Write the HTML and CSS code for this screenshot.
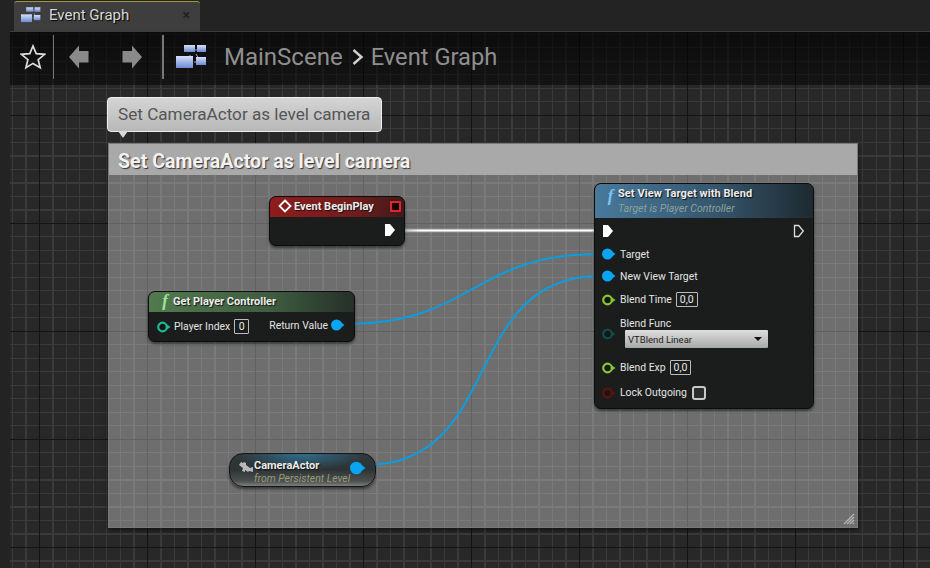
FILE: index.html
```html
<!DOCTYPE html>
<html lang="en">
<head>
  <meta charset="UTF-8" />
  <title>Event Graph</title>
  <link rel="stylesheet" href="styles.css">
</head>
<body>
  <svg class="defs" width="0" height="0">
    <defs>
      <linearGradient id="blk" x1="0" y1="0" x2="0" y2="1">
        <stop offset="0" stop-color="#d5e0f8"/>
        <stop offset="1" stop-color="#6f8bd0"/>
      </linearGradient>
      <linearGradient id="wire-fade" gradientUnits="userSpaceOnUse" x1="396" y1="0" x2="420" y2="0">
        <stop offset="0" stop-color="#999"/>
        <stop offset="1" stop-color="#fff"/>
      </linearGradient>
      <symbol id="graph-icon" viewBox="0 0 31 24">
        <path d="M17 5h5M14 10v4M20 9l3 5M18 17h4" stroke="#8fa5d8" stroke-width="1" fill="none"/>
        <rect x="8" y="0" width="11" height="7" fill="url(#blk)"/>
        <rect x="21" y="0" width="9" height="7" fill="url(#blk)"/>
        <rect x="0" y="11" width="17" height="12" fill="url(#blk)"/>
        <rect x="20" y="12" width="10" height="8" fill="url(#blk)"/>
      </symbol>
      <symbol id="exec-on" viewBox="0 0 12 14">
        <path d="M1 1h5l5 6-5 6H1z" fill="#fff"/>
      </symbol>
      <symbol id="exec-off" viewBox="0 0 12 14">
        <path d="M1.5 1.5h4.2l4.6 5.500-4.600 5.500H1.500z" fill="none" stroke="#ddd" stroke-width="1.300"/>
      </symbol>
      <symbol id="pin-full" viewBox="0 0 14 12">
        <path d="M9 2.500l4.500 3.500-4.500 3.500z" fill="currentColor"/>
        <circle cx="5.500" cy="6" r="5.500" fill="currentColor"/>
      </symbol>
      <symbol id="pin-open" viewBox="0 0 14 12">
        <path d="M10 3.500l3.500 2.500-3.500 2.500z" fill="currentColor"/>
        <circle cx="5.500" cy="6" r="4.300" fill="#141716" stroke="currentColor" stroke-width="2.200"/>
      </symbol>
    </defs>
  </svg>

  <div class="tabs">
    <div class="tab">
      <svg class="tab-icon"><use href="#graph-icon"/></svg>
      <span class="tab-name">Event Graph</span>
      <span class="tab-close">×</span>
    </div>
  </div>

  <div class="graph">
    <div class="crumbs">
      <svg class="star" viewBox="0 0 26 26">
        <path d="M13 2l3.200 7.700 8.300.6-6.300 5.400 2 8.100-7.200-4.400-7.100 4.400 2-8.100-6.400-5.400 8.300-.6z" fill="none" stroke="#ddd" stroke-width="1.700" stroke-linejoin="miter"/>
      </svg>
      <span class="sep"></span>
      <svg class="nav" viewBox="0 0 22 26">
        <path d="M1 13L11 1.500V7h9.500v11.500H11v6z" fill="#8a8a8a"/>
      </svg>
      <svg class="nav nav-next" viewBox="0 0 22 26">
        <path d="M21 13L11 1.500V7H1.500v11.500H11v6z" fill="#8a8a8a"/>
      </svg>
      <span class="sep sep-wide"></span>
      <svg class="crumb-icon"><use href="#graph-icon"/></svg>
      <span class="crumb crumb-first">MainScene</span>
      <svg class="chevron" viewBox="0 0 14 18">
        <path d="M2.500 2l8 7-8 7" fill="none" stroke="#cfcfcf" stroke-width="2.400"/>
      </svg>
      <span class="crumb crumb-last">Event Graph</span>
    </div>

    <div class="bubble">Set CameraActor as level camera</div>

    <div class="comment">
      <div class="comment-title">Set CameraActor as level camera</div>
      <svg class="grip" viewBox="0 0 12 12">
        <path d="M1 11L11 1M4 11l7-7M7 11l4-4M10 11l1-1" stroke="#b5b5b5" stroke-width="1.200" fill="none"/>
      </svg>
    </div>

    <svg class="wires" width="930" height="568" viewBox="0 0 930 568">
      <path d="M345 324C475 324 470 254 600 254" class="wire-obj"/>
      <path d="M365 465C505 465 460 276 600 276" class="wire-obj"/>
      <path d="M396 230.500H604" class="wire-glow"/>
      <path d="M396 230.500H604" class="wire-exec"/>
    </svg>

    <div class="node node-begin">
      <div class="head head-red">
        <svg class="diamond" viewBox="0 0 14 14"><path d="M7 1.500L12.500 7 7 12.500 1.500 7z" fill="none" stroke="#fff" stroke-width="1.800"/></svg>
        <span class="title">Event BeginPlay</span>
        <span class="stop"></span>
      </div>
      <div class="rows rows-end">
        <svg class="exec"><use href="#exec-on"/></svg>
      </div>
    </div>

    <div class="node node-player">
      <div class="head head-green">
        <span class="fn fn-green">f</span>
        <span class="title">Get Player Controller</span>
      </div>
      <div class="rows rows-split">
        <div class="row">
          <svg class="pin teal"><use href="#pin-open"/></svg>
          <span class="label">Player Index</span>
          <span class="field">0</span>
        </div>
        <div class="row">
          <span class="label">Return Value</span>
          <svg class="pin blue"><use href="#pin-full"/></svg>
        </div>
      </div>
    </div>

    <div class="node node-actor">
      <svg class="cam" viewBox="0 0 16 14">
        <path d="M1 4l2-3 2 1 1-1 2 1v2l4 3 3-1v5l-4-1-1 1-3-2v2l-3-1 1-3z" fill="#b8b8b8"/>
      </svg>
      <div class="actor-text">
        <span class="title">CameraActor</span>
        <span class="sub sub-olive">from Persistent Level</span>
      </div>
      <svg class="pin pin-big blue"><use href="#pin-full"/></svg>
    </div>

    <div class="node node-target">
      <div class="head head-blue">
        <span class="fn fn-blue">f</span>
        <div class="head-text">
          <span class="title">Set View Target with Blend</span>
          <span class="sub">Target is Player Controller</span>
        </div>
      </div>
      <div class="pins">
        <div class="row row-exec">
          <svg class="exec"><use href="#exec-on"/></svg>
          <svg class="exec"><use href="#exec-off"/></svg>
        </div>
        <div class="row row-22">
          <svg class="pin blue"><use href="#pin-full"/></svg>
          <span class="label">Target</span>
        </div>
        <div class="row row-22">
          <svg class="pin blue"><use href="#pin-full"/></svg>
          <span class="label">New View Target</span>
        </div>
        <div class="row row-26">
          <svg class="pin lime"><use href="#pin-open"/></svg>
          <span class="label">Blend Time</span>
          <span class="field">0,0</span>
        </div>
        <div class="row row-func">
          <svg class="pin dim-teal"><use href="#pin-open"/></svg>
          <div class="func">
            <span class="label">Blend Func</span>
            <div class="select">VTBlend Linear<span class="caret"></span></div>
          </div>
        </div>
        <div class="row row-26">
          <svg class="pin lime"><use href="#pin-open"/></svg>
          <span class="label">Blend Exp</span>
          <span class="field">0,0</span>
        </div>
        <div class="row row-26">
          <svg class="pin dim-red"><use href="#pin-open"/></svg>
          <span class="label">Lock Outgoing</span>
          <span class="check"></span>
        </div>
      </div>
    </div>
  </div>
</body>
</html>
```

FILE: styles.css
```css
* {
  box-sizing: border-box;
}
html, body {
  height: 100%;
}
body {
  margin: 0;
  width: 930px;
  height: 568px;
  overflow: hidden;
  background: #232323;
  font-family: Roboto, 'Liberation Sans', sans-serif;
  color: #e8e8e8;
  display: flex;
  flex-direction: column;
}
.defs {
  position: absolute;
}

/* tab strip */
.tabs {
  height: 31px;
  padding-left: 14px;
  flex: none;
}
.tab {
  width: 186px;
  height: 30px;
  margin-top: 1px;
  background: #3e3e3e;
  border-top: 1px solid #a3963a;
  border-radius: 3px 3px 0 0;
  display: flex;
  align-items: center;
  padding: 0 0 3px 7px;
}
.tab-icon {
  width: 20px;
  height: 16px;
}
.tab-name {
  margin-left: 8px;
  font-size: 15px;
  color: #d8d8d8;
  text-shadow: 1px 1px 1px #000;
}
.tab-close {
  margin-left: auto;
  margin-right: 10px;
  font-size: 14px;
  color: #222;
  font-weight: 700;
}

/* graph panel */
.graph {
  position: relative;
  flex: 1;
  margin-left: 10px;
  border-top: 1px solid #3c3c3c;
  background-color: #282828;
  background-image:
    repeating-linear-gradient(to right, #141414 29px 30px, transparent 30px 137px),
    repeating-linear-gradient(to bottom, #141414 83px 84px, transparent 84px 191px),
    repeating-linear-gradient(to right, #3a3a3a 2px 3px, transparent 3px 15.5px),
    repeating-linear-gradient(to bottom, #3a3a3a 2px 3px, transparent 3px 15.5px);
}
.crumbs {
  height: 53px;
  background: linear-gradient(to bottom, rgba(0, 0, 0, 0.72), rgba(0, 0, 0, 0.5));
  display: flex;
  align-items: center;
  padding: 0 0 4px 10px;
}
.star {
  width: 26px;
  height: 26px;
}
.sep {
  width: 1px;
  height: 44px;
  margin-left: 7px;
  background: #777;
}
.nav {
  width: 22px;
  height: 26px;
  margin-left: 14px;
}
.nav-next {
  margin-left: 31px;
}
.sep-wide {
  margin-left: 19px;
  width: 2px;
}
.crumb-icon {
  width: 31px;
  height: 24px;
  margin-left: 12px;
}
.crumb {
  font-size: 24px;
  color: #8f8f8f;
}
.crumb-first {
  margin-left: 17px;
}
.crumb-last {
  margin-left: 6px;
  font-size: 23.700px;
}
.chevron {
  width: 14px;
  height: 18px;
  margin-left: 8px;
}

/* comment box */
.bubble {
  position: absolute;
  left: 97px;
  top: 65px;
  width: 275px;
  height: 35px;
  padding-left: 10px;
  line-height: 33px;
  font-size: 17.150px;
  color: #555;
  background: linear-gradient(to bottom, #d4d4d4, #b8b8b8);
  border: 1px solid #eee;
  border-radius: 4px;
}
.bubble::after {
  content: "";
  position: absolute;
  left: 10px;
  top: 33px;
  border: 5px solid transparent;
  border-top: 7px solid #d8d8d8;
}
.comment {
  position: absolute;
  left: 98px;
  top: 111px;
  width: 750px;
  height: 385px;
  background: rgba(255, 255, 255, 0.33);
  border: 1px solid #7a7a7a;
  box-shadow: 0 2px 5px rgba(0, 0, 0, 0.55);
}
.comment-title {
  height: 31px;
  padding-left: 9px;
  line-height: 36px;
  font-size: 19.600px;
  font-weight: 700;
  color: #f2f2f2;
  background: #a9a9a9;
  text-shadow: 1px 1px 1px #333;
}
.grip {
  position: absolute;
  right: 2px;
  bottom: 2px;
  width: 12px;
  height: 12px;
}
.wires {
  position: absolute;
  left: -10px;
  top: -32px;
  pointer-events: none;
}
.wire-obj {
  fill: none;
  stroke: #0a9ee0;
  stroke-width: 2;
}
.wire-glow {
  fill: none;
  stroke: rgba(255, 255, 255, 0.25);
  stroke-width: 4;
}
.wire-exec {
  fill: none;
  stroke: url(#wire-fade);
  stroke-width: 2;
}

/* nodes */
.node {
  position: absolute;
  background: #1a1d1c;
  border: 1px solid #0c0c0c;
  border-radius: 7px;
  box-shadow: 0 2px 3px rgba(0, 0, 0, 0.5);
  font-size: 10.400px;
}
.head {
  display: flex;
  align-items: center;
  border-radius: 6px 6px 0 0;
  padding-left: 8px;
}
.head-red {
  height: 20px;
  padding-bottom: 2px;
  background: linear-gradient(to right, #8e1c1c, #741c1c 60%, #401a1a);
}
.head-green {
  height: 20px;
  padding-bottom: 2px;
  background: linear-gradient(to right, #527a4e, #3e5c40 60%, #263028);
}
.head-blue {
  height: 34px;
  background: linear-gradient(to right, #48799b, #35566e 55%, #1e2a30);
}
.title {
  font-weight: 700;
  font-size: 11px;
  color: #ececec;
  white-space: nowrap;
  text-shadow: 1px 1px 1px #111;
}
.sub {
  font-style: italic;
  font-size: 10.500px;
  color: #8fa09a;
  white-space: nowrap;
}
.sub-olive {
  color: #989a78;
}
.fn {
  font-family: 'Liberation Serif', serif;
  font-style: italic;
  font-weight: 700;
  font-size: 17px;
  line-height: 18px;
  text-align: center;
  flex: none;
}
.fn-green {
  color: #9ee49a;
  width: 16px;
}
.fn-blue {
  color: #7cc4f0;
  width: 15px;
  align-self: flex-start;
  margin-top: 3px;
}
.head-text {
  display: flex;
  flex-direction: column;
  gap: 2px;
}
.node-target .title {
  letter-spacing: 0.08px;
}
.diamond {
  width: 14px;
  height: 14px;
  margin-right: 2px;
}
.stop {
  width: 11px;
  height: 11px;
  margin-left: auto;
  margin-right: 3px;
  background: #150505;
  border: 2px solid #e0252f;
  border-radius: 1px;
}
.row {
  display: flex;
  align-items: center;
}
.label {
  color: #e4e4e4;
  white-space: nowrap;
}
.field {
  min-width: 15px;
  height: 15px;
  line-height: 13px;
  margin-left: 4px;
  padding: 0 3px;
  border: 1px solid #bbb;
  border-radius: 1px;
  text-align: center;
  font-size: 10.500px;
}
.pin {
  width: 14px;
  height: 12px;
  flex: none;
  margin-right: 4px;
}
.pin-big {
  width: 16px;
  height: 14px;
}
.exec {
  width: 12px;
  height: 14px;
}
.blue { color: #0aa5f2; }
.teal { color: #1fb896; }
.lime { color: #86c72e; }
.dim-teal { color: #0b4e4c; }
.dim-red { color: #621010; }

/* node placement on the canvas */
.node-begin {
  left: 259px;
  top: 164px;
  width: 136px;
  height: 50px;
}
.rows-end {
  display: flex;
  justify-content: flex-end;
  padding: 6px 8px 0 0;
}
.node-player {
  left: 138px;
  top: 259px;
  width: 207px;
  height: 51px;
}
.rows-split {
  display: flex;
  justify-content: space-between;
  padding: 7px 9px 0 8px;
}
.rows-split .row:first-child .pin {
  margin-right: 3px;
}
.rows-split .row + .row .pin {
  margin: 0 0 0 3px;
}
.rows-split .row + .row {
  margin-top: -3px;
}
.node-actor {
  left: 219px;
  top: 421px;
  width: 147px;
  height: 34px;
  border-radius: 14px;
  border-color: #141414;
  background:
    radial-gradient(ellipse 45% 50% at 50% 0, #2f6d8e, transparent),
    linear-gradient(to bottom, #2f383a, #2e3435 50%, #4c504f 85%, #7c7f7d);
  display: flex;
  align-items: center;
  padding: 0 12px 0 8px;
}
.cam {
  width: 16px;
  height: 14px;
  margin-top: -5px;
  flex: none;
}
.actor-text {
  display: flex;
  flex-direction: column;
  margin-top: 3px;
  flex: 1;
}
.node-actor .pin {
  margin: -4px 0 0 0;
}
.node-target {
  left: 584px;
  top: 151px;
  width: 220px;
  height: 226px;
}
.pins {
  padding: 0 8px 0 7px;
}
.row-exec {
  height: 25px;
  justify-content: space-between;
}
.row-22 {
  height: 22px;
}
.row-26 {
  height: 25px;
}
.row-func {
  height: 43px;
}
.func {
  display: flex;
  flex-direction: column;
  margin-top: -2px;
}
.select {
  display: flex;
  align-items: center;
  justify-content: space-between;
  width: 143px;
  height: 18px;
  margin-left: 5px;
  padding: 0 6px 0 3px;
  background: linear-gradient(to bottom, #dedede, #a8a8a8);
  border-radius: 1px;
  color: #222;
  font-size: 9.500px;
}
.caret {
  border: 4px solid transparent;
  border-top: 4px solid #111;
  border-bottom: 0;
}
.check {
  width: 14px;
  height: 14px;
  margin-left: 5px;
  border: 2px solid #c8c8c8;
  border-radius: 3px;
  background: #2c2c2c;
}
```
